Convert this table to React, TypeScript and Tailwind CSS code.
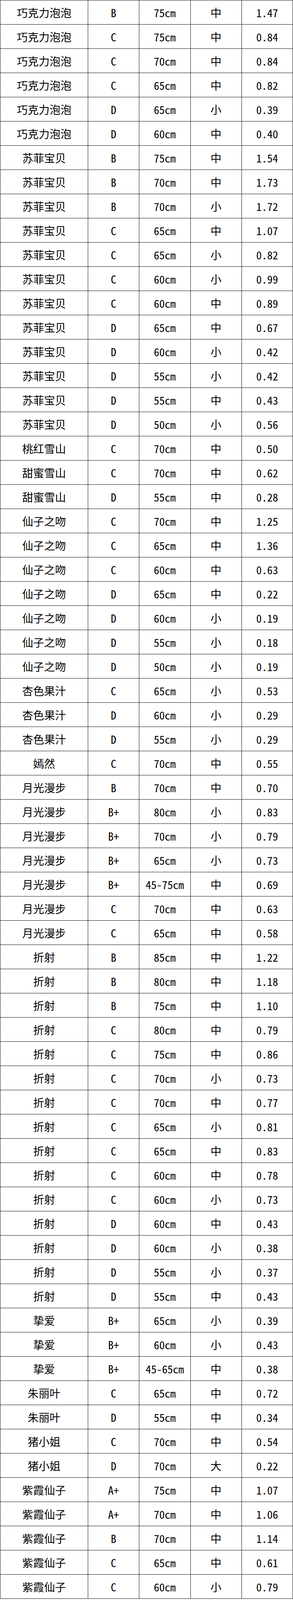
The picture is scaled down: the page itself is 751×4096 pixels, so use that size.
const ROWS: [string, string, string, string, string][] = [
  ['巧克力泡泡', 'B', '75cm', '中', '1.47'],
  ['巧克力泡泡', 'C', '75cm', '中', '0.84'],
  ['巧克力泡泡', 'C', '70cm', '中', '0.84'],
  ['巧克力泡泡', 'C', '65cm', '中', '0.82'],
  ['巧克力泡泡', 'D', '65cm', '小', '0.39'],
  ['巧克力泡泡', 'D', '60cm', '中', '0.40'],
  ['苏菲宝贝', 'B', '75cm', '中', '1.54'],
  ['苏菲宝贝', 'B', '70cm', '中', '1.73'],
  ['苏菲宝贝', 'B', '70cm', '小', '1.72'],
  ['苏菲宝贝', 'C', '65cm', '中', '1.07'],
  ['苏菲宝贝', 'C', '65cm', '小', '0.82'],
  ['苏菲宝贝', 'C', '60cm', '小', '0.99'],
  ['苏菲宝贝', 'C', '60cm', '中', '0.89'],
  ['苏菲宝贝', 'D', '65cm', '中', '0.67'],
  ['苏菲宝贝', 'D', '60cm', '小', '0.42'],
  ['苏菲宝贝', 'D', '55cm', '小', '0.42'],
  ['苏菲宝贝', 'D', '55cm', '中', '0.43'],
  ['苏菲宝贝', 'D', '50cm', '小', '0.56'],
  ['桃红雪山', 'C', '70cm', '中', '0.50'],
  ['甜蜜雪山', 'C', '70cm', '中', '0.62'],
  ['甜蜜雪山', 'D', '55cm', '中', '0.28'],
  ['仙子之吻', 'C', '70cm', '中', '1.25'],
  ['仙子之吻', 'C', '65cm', '中', '1.36'],
  ['仙子之吻', 'C', '60cm', '中', '0.63'],
  ['仙子之吻', 'D', '65cm', '中', '0.22'],
  ['仙子之吻', 'D', '60cm', '小', '0.19'],
  ['仙子之吻', 'D', '55cm', '小', '0.18'],
  ['仙子之吻', 'D', '50cm', '小', '0.19'],
  ['杏色果汁', 'C', '65cm', '小', '0.53'],
  ['杏色果汁', 'D', '60cm', '小', '0.29'],
  ['杏色果汁', 'D', '55cm', '小', '0.29'],
  ['嫣然', 'C', '70cm', '中', '0.55'],
  ['月光漫步', 'B', '70cm', '中', '0.70'],
  ['月光漫步', 'B+', '80cm', '小', '0.83'],
  ['月光漫步', 'B+', '70cm', '小', '0.79'],
  ['月光漫步', 'B+', '65cm', '小', '0.73'],
  ['月光漫步', 'B+', '45-75cm', '中', '0.69'],
  ['月光漫步', 'C', '70cm', '中', '0.63'],
  ['月光漫步', 'C', '65cm', '中', '0.58'],
  ['折射', 'B', '85cm', '中', '1.22'],
  ['折射', 'B', '80cm', '中', '1.18'],
  ['折射', 'B', '75cm', '中', '1.10'],
  ['折射', 'C', '80cm', '中', '0.79'],
  ['折射', 'C', '75cm', '中', '0.86'],
  ['折射', 'C', '70cm', '小', '0.73'],
  ['折射', 'C', '70cm', '中', '0.77'],
  ['折射', 'C', '65cm', '小', '0.81'],
  ['折射', 'C', '65cm', '中', '0.83'],
  ['折射', 'C', '60cm', '中', '0.78'],
  ['折射', 'C', '60cm', '小', '0.73'],
  ['折射', 'D', '60cm', '中', '0.43'],
  ['折射', 'D', '60cm', '小', '0.38'],
  ['折射', 'D', '55cm', '小', '0.37'],
  ['折射', 'D', '55cm', '中', '0.43'],
  ['挚爱', 'B+', '65cm', '小', '0.39'],
  ['挚爱', 'B+', '60cm', '小', '0.43'],
  ['挚爱', 'B+', '45-65cm', '中', '0.38'],
  ['朱丽叶', 'C', '65cm', '中', '0.72'],
  ['朱丽叶', 'D', '55cm', '中', '0.34'],
  ['猪小姐', 'C', '70cm', '中', '0.54'],
  ['猪小姐', 'D', '70cm', '大', '0.22'],
  ['紫霞仙子', 'A+', '75cm', '中', '1.07'],
  ['紫霞仙子', 'A+', '70cm', '中', '1.06'],
  ['紫霞仙子', 'B', '70cm', '中', '1.14'],
  ['紫霞仙子', 'C', '65cm', '中', '0.61'],
  ['紫霞仙子', 'C', '60cm', '小', '0.79'],
]

export default function App() {
  return (
    <div className="w-[751px] bg-white text-black font-['Noto_Sans_CJK_SC',sans-serif] [font-feature-settings:'hwid']">
      <table className="w-full table-fixed border-collapse">
        <colgroup>
          <col className="w-[225px]" />
          <col />
          <col />
          <col />
          <col />
        </colgroup>
        <tbody>
          {ROWS.map((row, i) => (
            <tr key={i} className="h-[62px]">
              {row.map((cell, j) => (
                <td
                  key={j}
                  className="border border-[#111] p-0 text-center align-middle text-[28px] leading-none"
                >
                  {cell}
                </td>
              ))}
            </tr>
          ))}
        </tbody>
      </table>
    </div>
  )
}
